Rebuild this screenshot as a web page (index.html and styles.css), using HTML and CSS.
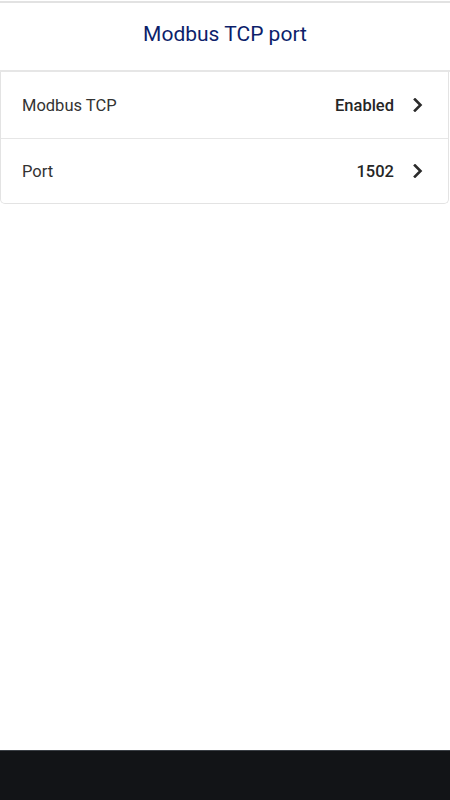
FILE: index.html
```html
<!DOCTYPE html>
<html>
<head>
<meta charset="utf-8">
<link rel="stylesheet" href="styles.css">
</head>
<body>
<div class="app">
  <div class="topline"></div>
  <header class="header">
    <h1 class="title">Modbus TCP port</h1>
  </header>
  <div class="card">
    <div class="row">
      <span class="label">Modbus TCP</span>
      <span class="value">Enabled</span>
      <svg class="chev" width="12" height="14" viewBox="0 0 12 14"><path d="M3 1.5 L8.5 7 L3 12.5" fill="none" stroke="#2b2b2b" stroke-width="2.6" stroke-linecap="square"/></svg>
    </div>
    <div class="row">
      <span class="label">Port</span>
      <span class="value">1502</span>
      <svg class="chev" width="12" height="14" viewBox="0 0 12 14"><path d="M3 1.5 L8.5 7 L3 12.5" fill="none" stroke="#2b2b2b" stroke-width="2.6" stroke-linecap="square"/></svg>
    </div>
  </div>
  <div class="spacer"></div>
  <div class="navbar"></div>
</div>
</body>
</html>
```
FILE: styles.css
```css
* { box-sizing: border-box; }
html, body { margin: 0; padding: 0; background: #fff; }
body { font-family: Roboto, "Noto Sans", Arial, sans-serif; }
.app { height: 800px; display: flex; flex-direction: column; }
.topline { height: 3px; border-top: 1px solid #fff; background: #e2e2e2; }
.header { height: 69px; display: flex; align-items: center; justify-content: center; border-bottom: 2px solid #e6e6e6; }
.title { margin: 0; font-size: 21px; font-weight: 400; color: #0d1f6b; padding-bottom: 6px; }
.card { border: 1px solid #e3e3e3; border-top: none; border-radius: 0 0 5px 5px; margin-right: 1px; }
.row { height: 66px; display: flex; align-items: center; padding: 0 24px 0 21px; font-size: 16.5px; }
.row + .row { border-top: 1px solid #e6e6e6; height: 65px; }
.label { flex: 1; color: #333; }
.value { color: #262626; font-weight: 500; margin-right: 18px; }
.chev { display: block; }
.spacer { flex: 1; }
.navbar { height: 50px; background: #121417; border-top: 1px solid #3a3f45; }
```
